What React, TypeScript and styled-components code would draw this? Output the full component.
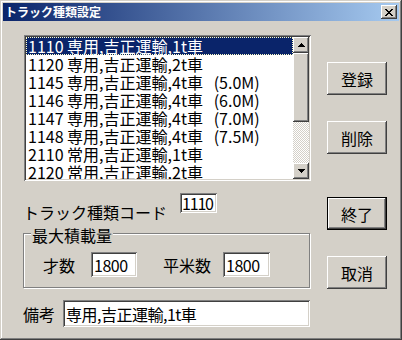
import React from "react";
import styled, { createGlobalStyle, css } from "styled-components";

const FACE = "#D4D0C8";
const FONT = `"Noto Sans CJK JP", "Noto Sans CJK SC", sans-serif`;

const GlobalStyle = createGlobalStyle`
  html, body { margin: 0; padding: 0; background: ${FACE}; }
  body { font-family: ${FONT}; }
`;

const raised = css`
  background: ${FACE};
  box-shadow: inset -1px -1px #404040, inset 1px 1px #ffffff,
    inset -2px -2px #808080, inset 2px 2px ${FACE};
`;

const sunken = css`
  box-shadow: inset 1px 1px #808080, inset -1px -1px #ffffff,
    inset 2px 2px #404040, inset -2px -2px ${FACE};
`;

const Window = styled.div`
  box-sizing: border-box;
  width: 402px;
  height: 340px;
  padding: 3px;
  background: ${FACE};
  box-shadow: inset -1px -1px #404040, inset 1px 1px ${FACE},
    inset -2px -2px #808080, inset 2px 2px #ffffff;
  display: flex;
  flex-direction: column;
  font-family: ${FONT};
  font-size: 16px;
  color: #000;
`;

const TitleBar = styled.div`
  height: 18px;
  display: flex;
  align-items: center;
  padding-left: 2px;
  background: linear-gradient(to right, #0a246a, #a6caf0);
`;

const Title = styled.span`
  color: #fff;
  font-weight: 700;
  font-size: 12px;
  line-height: 18px;
`;

const CloseButton = styled.div`
  ${raised};
  margin-left: auto;
  margin-right: 2px;
  width: 16px;
  height: 14px;
  display: flex;
  align-items: center;
  justify-content: center;
`;

const Body = styled.div`
  display: flex;
  padding: 14px 0 0 20px;
  gap: 16px;
`;

const LeftColumn = styled.div`
  width: 288px;
  display: flex;
  flex-direction: column;
`;

const ListBox = styled.div`
  ${sunken};
  box-sizing: border-box;
  margin-left: 1px;
  width: 287px;
  height: 146px;
  padding: 2px;
  background: #fff;
  display: flex;
`;

const Items = styled.div`
  flex: 1;
  overflow: hidden;
`;

const Row = styled.div<{ $selected?: boolean }>`
  box-sizing: border-box;
  height: 18px;
  line-height: 16px;
  padding-left: 1px;
  white-space: pre;
  border: 1px solid transparent;
  ${(p) =>
    p.$selected &&
    css`
      background: #0a246a;
      color: #fff;
      border: 1px dotted #ffffc8;
    `}
`;

const ScrollBar = styled.div`
  width: 16px;
  display: flex;
  flex-direction: column;
`;

const ScrollButton = styled.div`
  ${raised};
  width: 16px;
  height: 16px;
  display: flex;
  align-items: center;
  justify-content: center;
`;

const Thumb = styled.div`
  ${raised};
  height: 69px;
`;

const Track = styled.div`
  flex: 1;
  background-color: #fff;
  background-image: conic-gradient(
    ${FACE} 25%,
    #fff 0 50%,
    ${FACE} 0 75%,
    #fff 0
  );
  background-size: 2px 2px;
`;

const CodeRow = styled.div`
  display: flex;
  align-items: flex-start;
  margin-top: 12px;
  height: 30px;
`;

const Label = styled.span<{ $gap?: number; $top?: number }>`
  line-height: 16px;
  white-space: nowrap;
  margin-left: ${(p) => p.$gap ?? 0}px;
  margin-top: ${(p) => p.$top ?? 0}px;
`;

const Field = styled.input<{ $w: number; $h: number; $gap?: number; $tight?: boolean }>`
  ${sunken};
  box-sizing: border-box;
  border: none;
  outline: none;
  background: #fff;
  width: ${(p) => p.$w}px;
  height: ${(p) => p.$h}px;
  margin: 0 0 0 ${(p) => p.$gap ?? 0}px;
  padding: 0 0 0 ${(p) => (p.$tight ? 2 : 3)}px;
  font-family: ${FONT};
  font-size: 16px;
  letter-spacing: ${(p) => (p.$tight ? -1.2 : -0.5)}px;
  color: #000;
`;

const GroupBox = styled.fieldset`
  box-sizing: border-box;
  width: 287px;
  margin: 0;
  min-width: 0;
  padding: 0 0 10px 7px;
  border: 1px solid #808080;
  box-shadow: inset 1px 1px #fff, 1px 1px #fff;
`;

const Legend = styled.legend`
  padding: 4px 1px 0 1px;
  line-height: 16px;
  background: ${FACE};
`;

const GroupRow = styled.div`
  display: flex;
  align-items: center;
  margin-top: 9px;
  height: 25px;
`;

const RemarksRow = styled.div`
  display: flex;
  align-items: center;
  margin-top: 12px;
`;

const RightColumn = styled.div`
  display: flex;
  flex-direction: column;
  padding-top: 27px;
`;

const Button = styled.div<{ $gap?: number; $default?: boolean }>`
  box-sizing: border-box;
  width: 60px;
  height: 33px;
  margin-top: ${(p) => p.$gap ?? 0}px;
  display: flex;
  align-items: center;
  justify-content: center;
  line-height: 16px;
  ${raised};
  ${(p) =>
    p.$default &&
    css`
      border: 1px solid #000;
    `}
`;

const Arrow = ({ up }: { up?: boolean }) => (
  <svg width="7" height="4" viewBox="0 0 7 4" shapeRendering="crispEdges">
    {up ? (
      <path d="M3 0h1v1h1v1h1v1h1v1H0V3h1V2h1V1h1z" fill="#000" />
    ) : (
      <path d="M0 0h7v1H6v1H5v1H4v1H3V3H2V2H1V1H0z" fill="#000" />
    )}
  </svg>
);

const CloseGlyph = () => (
  <svg width="8" height="7" viewBox="0 0 8 7" shapeRendering="crispEdges">
    <path
      d="M0 0h2v1h1v1h2V1h1V0h2v1H7v1H6v1H5v1h1v1h1v1h1v1H6V6H5V5H3v1H2v1H0V6h1V5h1V4h1V3H2V2H1V1H0z"
      fill="#000"
    />
  </svg>
);

const rows = [
  "1110 専用,吉正運輸,1t車",
  "1120 専用,吉正運輸,2t車",
  "1145 専用,吉正運輸,4t車   (5.0M)",
  "1146 専用,吉正運輸,4t車   (6.0M)",
  "1147 専用,吉正運輸,4t車   (7.0M)",
  "1148 専用,吉正運輸,4t車   (7.5M)",
  "2110 常用,吉正運輸,1t車",
  "2120 常用,吉正運輸,2t車",
];

export default function App() {
  return (
    <>
      <GlobalStyle />
      <Window>
        <TitleBar>
          <Title>トラック種類設定</Title>
          <CloseButton>
            <CloseGlyph />
          </CloseButton>
        </TitleBar>
        <Body>
          <LeftColumn>
            <ListBox>
              <Items>
                {rows.map((r, i) => (
                  <Row key={r} $selected={i === 0}>
                    {r}
                  </Row>
                ))}
              </Items>
              <ScrollBar>
                <ScrollButton>
                  <Arrow up />
                </ScrollButton>
                <Thumb />
                <Track />
                <ScrollButton>
                  <Arrow />
                </ScrollButton>
              </ScrollBar>
            </ListBox>
            <CodeRow>
              <Label $top={11}>トラック種類コード</Label>
              <Field $w={37} $h={20} $gap={13} $tight readOnly value="1110" />
            </CodeRow>
            <GroupBox>
              <Legend>最大積載量</Legend>
              <GroupRow>
                <Label $gap={12}>才数</Label>
                <Field $w={46} $h={25} $gap={16} readOnly value="1800" />
                <Label $gap={26}>平米数</Label>
                <Field $w={47} $h={25} $gap={12} readOnly value="1800" />
              </GroupRow>
            </GroupBox>
            <RemarksRow>
              <Label>備考</Label>
              <Field $w={247} $h={27} $gap={8} readOnly value="専用,吉正運輸,1t車" />
            </RemarksRow>
          </LeftColumn>
          <RightColumn>
            <Button>登録</Button>
            <Button $gap={26}>削除</Button>
            <Button $gap={43} $default>
              終了
            </Button>
            <Button $gap={26}>取消</Button>
          </RightColumn>
        </Body>
      </Window>
    </>
  );
}
